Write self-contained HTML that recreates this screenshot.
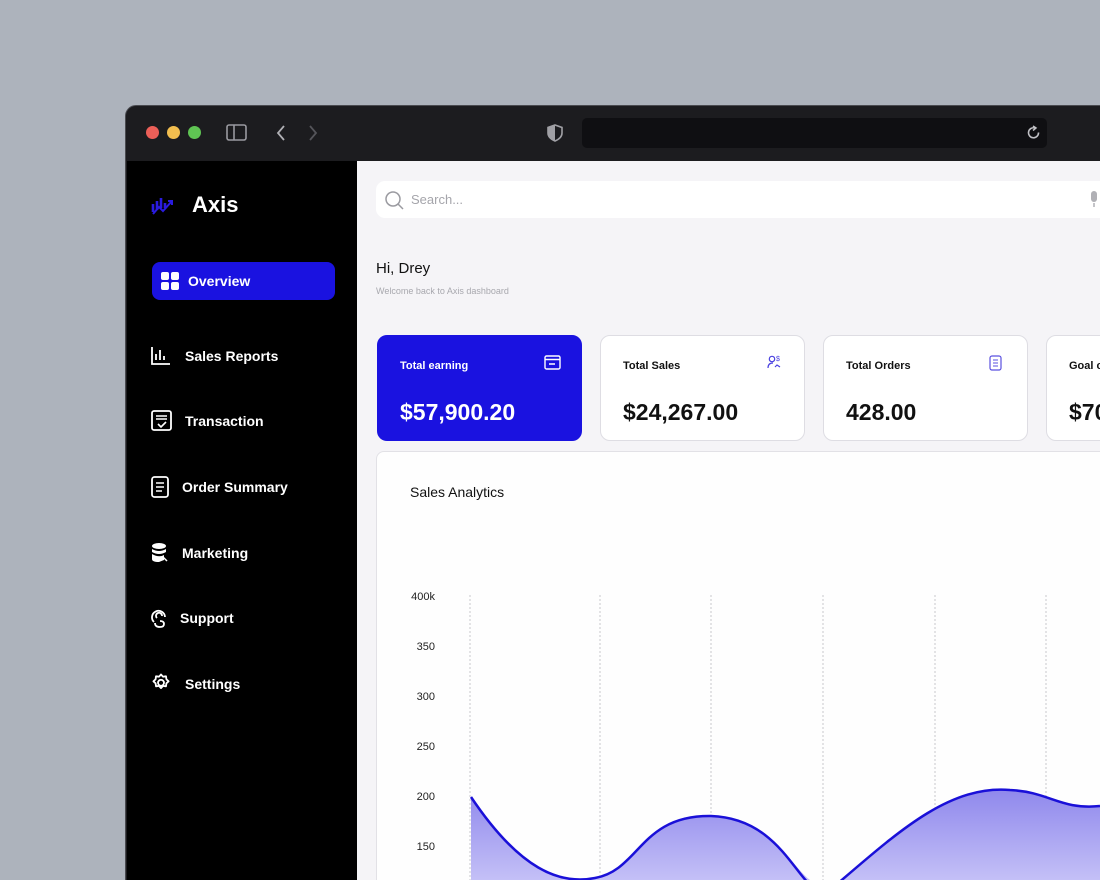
<!DOCTYPE html>
<html><head><style>
*{margin:0;padding:0;box-sizing:border-box}
html,body{width:1100px;height:880px;overflow:hidden}
body{background:#adb3bc;font-family:"Liberation Sans",sans-serif}
#w{position:relative;width:1100px;height:880px;overflow:hidden}
.win{position:absolute;left:125px;top:105px;width:1000px;height:800px;border-radius:11px;background:#1c1c1f;border:1px solid #4a4b50;overflow:hidden}
.side{position:absolute;left:127px;top:161px;width:230px;height:720px;background:#000}
.main{position:absolute;left:357px;top:161px;width:743px;height:720px;background:#f5f4f7}
.dot{position:absolute;top:126px;width:13px;height:13px;border-radius:50%}
.nav{position:absolute;color:#fff;font-weight:bold;font-size:14px}
.card{position:absolute;top:335px;width:205px;height:106px;border-radius:10px;background:#fff;border:1px solid #dedde3}
.card .t{position:absolute;left:22px;top:24px;font-size:11px;font-weight:bold;color:#111}
.card .v{position:absolute;left:22px;top:63px;font-size:23px;font-weight:bold;color:#111}
.yl{position:absolute;font-size:11px;color:#222;width:30px;text-align:right;left:405px}
</style></head><body><div id="w">
<div class="win"></div>
<div class="dot" style="left:146px;background:#ec5f58"></div>
<div class="dot" style="left:167px;background:#f2be4f"></div>
<div class="dot" style="left:188px;background:#5fc453"></div>
<svg style="position:absolute;left:226px;top:124px" width="22" height="18"><rect x="1" y="1" width="19" height="15" rx="2" fill="none" stroke="#9a9aa0" stroke-width="1.6"/><line x1="8" y1="1" x2="8" y2="16" stroke="#9a9aa0" stroke-width="1.6"/></svg>
<svg style="position:absolute;left:272px;top:124px" width="50" height="18"><path d="M12 2 L6 9 L12 16" fill="none" stroke="#b0b0b5" stroke-width="1.8"/><path d="M38 2 L44 9 L38 16" fill="none" stroke="#55555a" stroke-width="1.8"/></svg>
<svg style="position:absolute;left:547px;top:124px" width="16" height="18"><path d="M8 1 L15 3.5 L15 9 Q15 14 8 17 Q1 14 1 9 L1 3.5Z" fill="none" stroke="#a0a0a5" stroke-width="1.6"/><path d="M8 1 L1 3.5 L1 9 Q1 14 8 17Z" fill="#a0a0a5"/></svg>
<div style="position:absolute;left:582px;top:118px;width:465px;height:30px;background:#0f0f12;border-radius:5px"></div>
<svg style="position:absolute;left:1026px;top:125px" width="16" height="16"><path d="M12.5 7.5 A5 5 0 1 1 9 3" fill="none" stroke="#c0c0c5" stroke-width="1.6"/><path d="M7 1 L10 3 L7 5.5" fill="none" stroke="#c0c0c5" stroke-width="1.5"/></svg>
<div class="side"></div>
<div class="main"></div>
<svg style="position:absolute;left:151px;top:194px" width="24" height="22"><path d="M2 10v8M6 7v9M10 4v10M14 9v5" stroke="#2a1be0" stroke-width="2.6"/><path d="M2 20 L8 13 L12 17 L21 7 M17 7h4v4" fill="none" stroke="#2a1be0" stroke-width="2"/></svg>
<div class="nav" style="left:192px;top:192px;font-size:22px">Axis</div>
<div style="position:absolute;left:152px;top:262px;width:183px;height:38px;background:#1a12e0;border-radius:8px"></div>
<svg style="position:absolute;left:161px;top:272px" width="18" height="18"><rect x="0" y="0" width="8" height="8" rx="2" fill="#fff"/><rect x="10" y="0" width="8" height="8" rx="2" fill="#fff"/><rect x="0" y="10" width="8" height="8" rx="2" fill="#fff"/><rect x="10" y="10" width="8" height="8" rx="2" fill="#fff"/></svg>
<div class="nav" style="left:188px;top:273px">Overview</div>
<svg style="position:absolute;left:151px;top:346px" width="20" height="19"><path d="M1 1v17h18M5 14v-6M9 14v-10M13 14v-4" fill="none" stroke="#fff" stroke-width="1.8"/></svg>
<div class="nav" style="left:185px;top:348px">Sales Reports</div>
<svg style="position:absolute;left:151px;top:410px" width="21" height="22"><rect x="1" y="1" width="19" height="19" rx="2" fill="none" stroke="#fff" stroke-width="1.8"/><path d="M5 6h11M5 9h11M7 14l3 3 5-5" fill="none" stroke="#fff" stroke-width="1.6"/></svg>
<div class="nav" style="left:185px;top:413px">Transaction</div>
<svg style="position:absolute;left:151px;top:476px" width="18" height="22"><rect x="1" y="1" width="16" height="20" rx="2.5" fill="none" stroke="#fff" stroke-width="1.8"/><path d="M5 7h8M5 11h8M5 15h6" stroke="#fff" stroke-width="1.6"/></svg>
<div class="nav" style="left:182px;top:479px">Order Summary</div>
<svg style="position:absolute;left:151px;top:542px" width="18" height="21"><ellipse cx="8" cy="4" rx="7" ry="3" fill="#fff"/><path d="M1 7q7 4 14 0v3q-7 4-14 0zM1 12q7 4 12 1v5l-5 2q-7 0-7-3z" fill="#fff"/><path d="M12 15l4 4" stroke="#fff" stroke-width="1.5"/></svg>
<div class="nav" style="left:182px;top:545px">Marketing</div>
<svg style="position:absolute;left:151px;top:608px" width="17" height="21"><path d="M3 14 A6.5 6.5 0 1 1 14 9 M6 10 A3 3 0 1 1 11 8 M4 15 q0 4 5 4 q4 0 4-3 q0-3-4-3" fill="none" stroke="#fff" stroke-width="1.8"/></svg>
<div class="nav" style="left:180px;top:610px">Support</div>
<svg style="position:absolute;left:151px;top:673px" width="20" height="20" viewBox="0 0 20 20"><path d="M10 1.5l2 2.2 3-.4.4 3 2.2 2-2.2 2-.4 3-3-.4-2 2.2-2-2.2-3 .4-.4-3-2.2-2 2.2-2 .4-3 3 .4z" fill="none" stroke="#fff" stroke-width="1.8" stroke-linejoin="round"/><circle cx="10" cy="9.8" r="3" fill="none" stroke="#fff" stroke-width="1.8"/></svg>
<div class="nav" style="left:185px;top:676px">Settings</div>
<div style="position:absolute;left:376px;top:181px;width:740px;height:37px;background:#fff;border-radius:9px"></div>
<svg style="position:absolute;left:384px;top:190px" width="20" height="20"><circle cx="9" cy="9" r="7" fill="none" stroke="#9a9aa0" stroke-width="1.5"/><path d="M14 14l5 5" stroke="#9a9aa0" stroke-width="1.5"/></svg>
<div style="position:absolute;left:411px;top:192px;font-size:13px;color:#a5a5ab">Search...</div>
<svg style="position:absolute;left:1089px;top:191px" width="10" height="16"><rect x="2" y="0" width="6" height="11" rx="3" fill="#b0b0b5"/><path d="M5 12v4" stroke="#b0b0b5" stroke-width="1.5"/></svg>
<div style="position:absolute;left:376px;top:260px;font-size:15px;color:#111">Hi, Drey</div>
<div style="position:absolute;left:376px;top:286px;font-size:9px;color:#a8a8ae">Welcome back to Axis dashboard</div>
<div class="card" style="left:377px;background:#1a12e0;border-color:#1a12e0"><div class="t" style="color:#fff">Total earning</div><div class="v" style="color:#fff">$57,900.20</div>
<svg style="position:absolute;left:166px;top:19px" width="17" height="15"><rect x="1" y="1" width="15" height="13" rx="1.5" fill="none" stroke="#fff" stroke-width="1.4"/><path d="M1 4.5h15M5 9h6" stroke="#fff" stroke-width="1.4"/></svg></div>
<div class="card" style="left:600px"><div class="t">Total Sales</div><div class="v">$24,267.00</div>
<svg style="position:absolute;left:166px;top:19px" width="14" height="15"><circle cx="5" cy="4" r="2.7" fill="none" stroke="#4a40e0" stroke-width="1.2"/><path d="M1 13q0-5 5-5M8 12l2-2 3 2" fill="none" stroke="#4a40e0" stroke-width="1.2"/><text x="9" y="6" font-size="7" fill="#4a40e0" font-family="Liberation Sans">$</text></svg></div>
<div class="card" style="left:823px"><div class="t">Total Orders</div><div class="v">428.00</div>
<svg style="position:absolute;left:165px;top:19px" width="13" height="16"><rect x="1" y="1" width="11" height="14" rx="2" fill="none" stroke="#5a50e0" stroke-width="1.2"/><path d="M4 5h5M4 8h5M4 11h5" stroke="#5a50e0" stroke-width="1.1"/></svg></div>
<div class="card" style="left:1046px"><div class="t">Goal of</div><div class="v">$70</div></div>
<div style="position:absolute;left:376px;top:451px;width:740px;height:440px;background:#fefefe;border:1px solid #e2e1e6;border-radius:8px"></div>
<div style="position:absolute;left:410px;top:484px;font-size:14px;color:#111">Sales Analytics</div>
<div class="yl" style="top:591px">400k</div>
<div class="yl" style="top:641px">350</div>
<div class="yl" style="top:691px">300</div>
<div class="yl" style="top:741px">250</div>
<div class="yl" style="top:791px">200</div>
<div class="yl" style="top:841px">150</div>
<svg style="position:absolute;left:0;top:0" width="1100" height="880">
<defs><linearGradient id="g" x1="0" y1="0" x2="0" y2="1"><stop offset="0" stop-color="#8f88ec"/><stop offset="1" stop-color="#c4c0f7"/></linearGradient></defs>
<g stroke="#c8c8cc" stroke-dasharray="2 2" stroke-width="1"><path d="M470 595V880M600 595V880M711 595V880M823 595V880M935 595V880M1046 595V880"/></g>
<path d="M471 797 C520 870 560 885 595 878 C640 870 640 815 711 816 C770 818 790 865 810 880 L840 880 C900 830 950 785 1010 790 C1050 792 1060 810 1100 806 L1100 880 L471 880Z" fill="url(#g)"/>
<path d="M471 797 C520 870 560 885 595 878 C640 870 640 815 711 816 C770 818 790 865 810 885 M836 885 C900 830 950 785 1010 790 C1050 792 1060 810 1100 806" fill="none" stroke="#1a10d8" stroke-width="2.5"/>
</svg>
</div></body></html>
